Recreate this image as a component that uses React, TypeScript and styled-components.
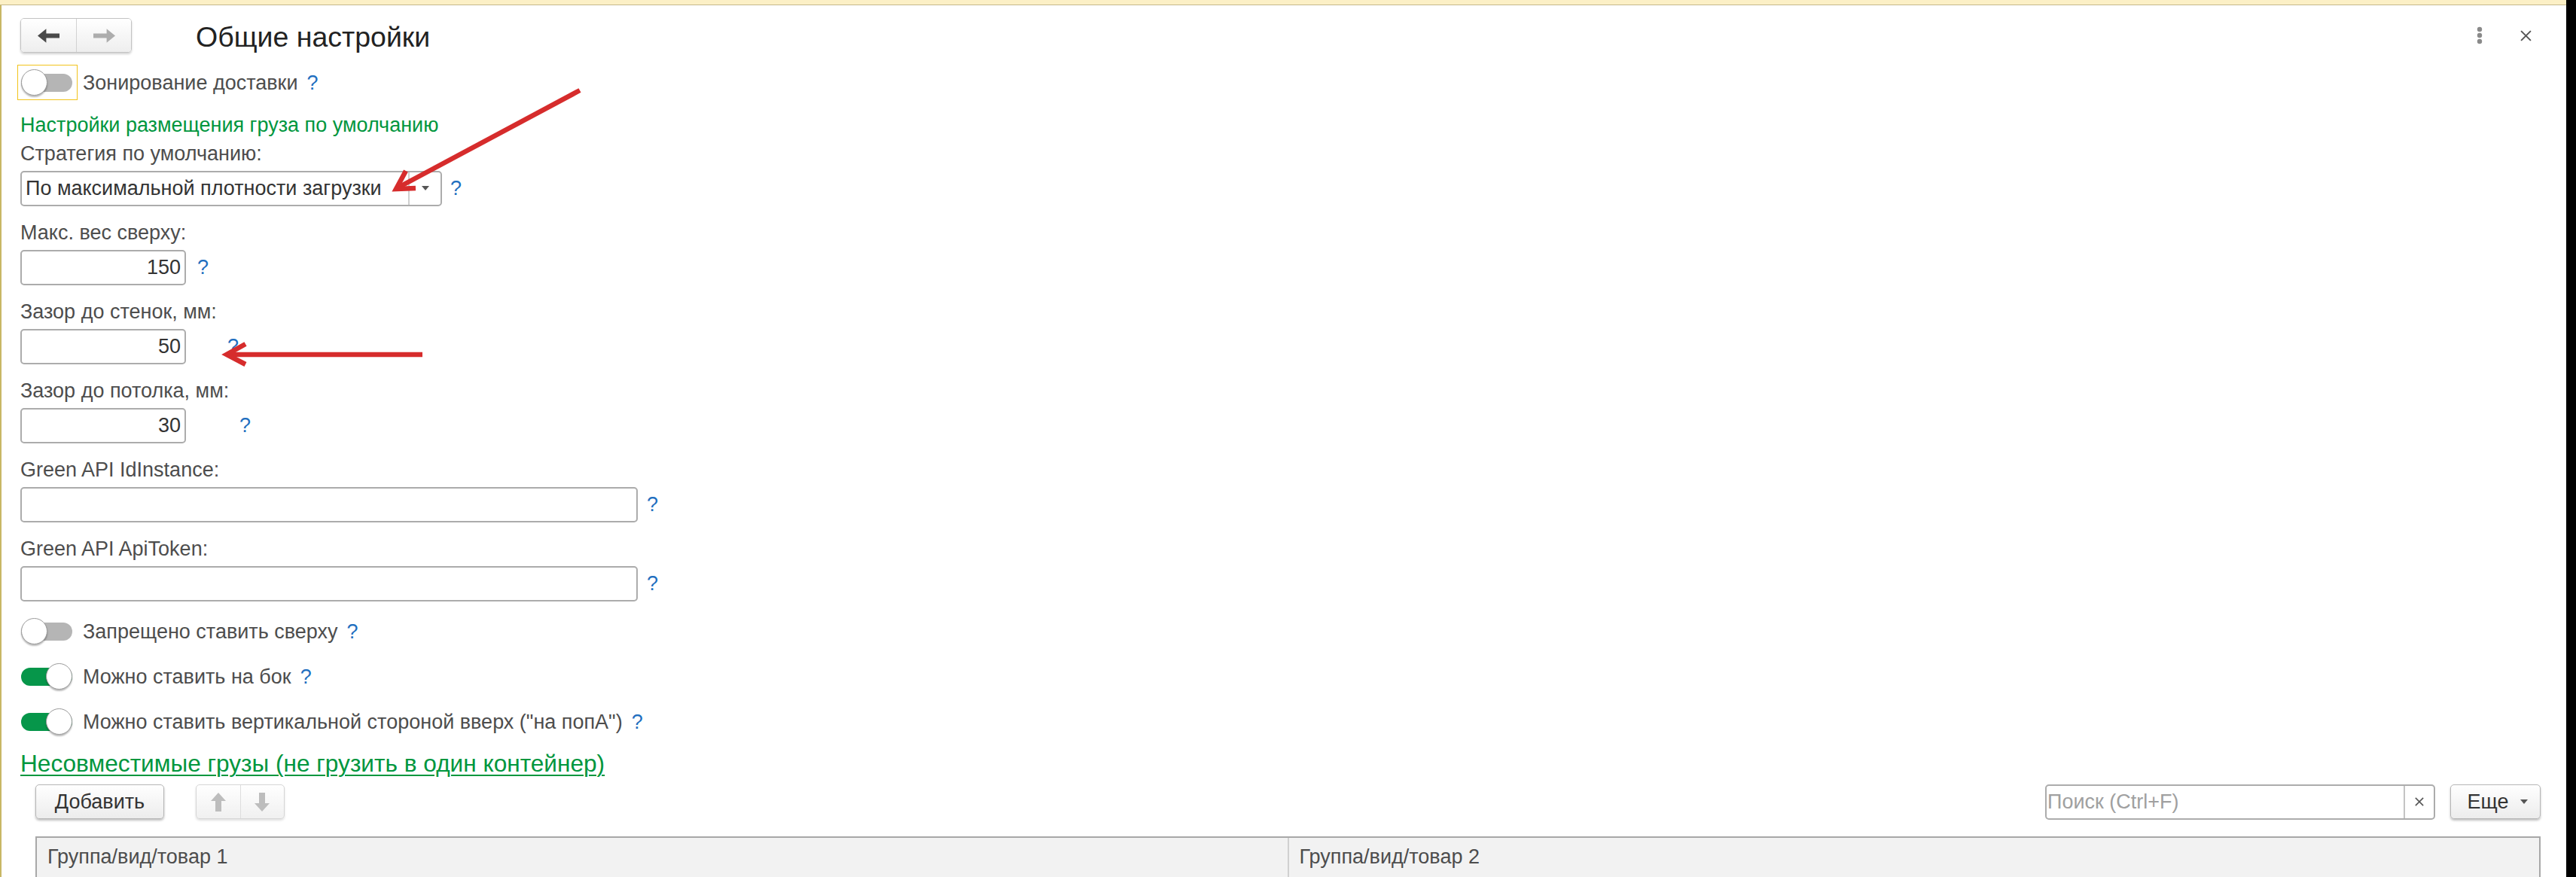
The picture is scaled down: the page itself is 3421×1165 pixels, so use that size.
import React from "react";
import styled, { createGlobalStyle } from "styled-components";

const GlobalStyle = createGlobalStyle`
  html, body {
    margin: 0;
    padding: 0;
    background: #fff;
  }
  body {
    font-family: "Liberation Sans", Arial, sans-serif;
    font-size: 27px;
    color: #4d4d4d;
  }
  * {
    box-sizing: border-box;
  }
`;

const colour = {
  label: "#4d4d4d",
  text: "#333333",
  green: "#00963e",
  help: "#1f6fbf",
  border: "#acacac",
  red: "#d62c2c",
};

const Screen = styled.div`
  display: flex;
  width: 3421px;
  height: 1165px;
  overflow: hidden;
`;

const Window = styled.div`
  position: relative;
  flex: 1;
  display: flex;
  flex-direction: column;
  background: #fff;
  overflow: hidden;
`;

const ScreenEdge = styled.div`
  width: 13px;
  flex-shrink: 0;
  background: #000;
`;

const TopStrip = styled.div`
  height: 7px;
  flex-shrink: 0;
  background: #fcf0c6;
  border-bottom: 1px solid #c6b98c;
`;

const Body = styled.div`
  flex: 1;
  display: flex;
  flex-direction: column;
  border-left: 2px solid #c8b765;
  padding: 0 34px 0 25px;
  white-space: nowrap;
`;

/* ---------- header ---------- */

const Header = styled.div`
  display: flex;
  align-items: flex-start;
  height: 46px;
  margin-top: 17px;
`;

const NavGroup = styled.div`
  display: flex;
  height: 46px;
  border: 1px solid #c3c3c3;
  border-radius: 5px;
  overflow: hidden;
  box-shadow: 0 2px 3px rgba(0, 0, 0, 0.18);
`;

const NavButton = styled.div`
  width: 73px;
  display: flex;
  align-items: center;
  justify-content: center;
  background: linear-gradient(#ffffff, #eeeeee);

  & + & {
    border-left: 1px solid #d2d2d2;
  }
`;

const Title = styled.h1`
  margin: 3px 0 0 85px;
  font-size: 37.5px;
  line-height: 44px;
  font-weight: normal;
  color: #222;
`;

const HeaderTools = styled.div`
  margin-left: auto;
  height: 46px;
  display: flex;
  align-items: center;
  gap: 50px;
  padding-right: 12px;
`;

/* ---------- form ---------- */

const ToggleRow = styled.div<{ $mt: number }>`
  display: flex;
  align-items: center;
  height: 47px;
  margin-top: ${(p) => p.$mt}px;
`;

const ToggleFrame = styled.div<{ $focused?: boolean }>`
  display: flex;
  align-items: center;
  height: 47px;
  margin-left: -4px;
  padding: 0 6px 0 4px;
  border: 1px solid ${(p) => (p.$focused ? "#f2c31b" : "transparent")};
`;

const Track = styled.span<{ $on?: boolean }>`
  display: flex;
  align-items: center;
  justify-content: ${(p) => (p.$on ? "flex-end" : "flex-start")};
  width: 68px;
  height: 24px;
  border-radius: 12px;
  background: ${(p) => (p.$on ? "#06964a" : "#b5b5b5")};
`;

const Knob = styled.span`
  flex-shrink: 0;
  width: 35px;
  height: 35px;
  border-radius: 50%;
  background: #fff;
  border: 1px solid #9c9c9c;
  box-shadow: 0 2px 2px rgba(0, 0, 0, 0.28);
`;

const ToggleText = styled.span`
  margin-left: 7px;
  line-height: 32px;
  color: ${colour.label};
`;

const Help = styled.span<{ $ml?: number }>`
  margin-left: ${(p) => p.$ml ?? 12}px;
  line-height: 32px;
  color: ${colour.help};
`;

const GroupTitle = styled.div`
  margin-top: 17px;
  line-height: 32px;
  color: ${colour.green};
`;

const FieldLabel = styled.div<{ $mt?: number }>`
  margin-top: ${(p) => p.$mt ?? 19.5}px;
  line-height: 32px;
  color: ${colour.label};
`;

const ControlRow = styled.div`
  display: flex;
  align-items: center;
  margin-top: 6.5px;
`;

const TextBox = styled.div<{ $width: number; $right?: boolean }>`
  width: ${(p) => p.$width}px;
  height: 47px;
  display: flex;
  align-items: center;
  justify-content: ${(p) => (p.$right ? "flex-end" : "flex-start")};
  padding: 0 5px;
  border: 2px solid ${colour.border};
  border-radius: 5px;
  background: #fff;
  color: ${colour.text};
`;

const Select = styled.div`
  width: 560px;
  height: 47px;
  display: flex;
  border: 2px solid ${colour.border};
  border-radius: 5px;
  background: #fff;
  color: ${colour.text};
`;

const SelectValue = styled.div`
  flex: 1;
  display: flex;
  align-items: center;
  padding-left: 5px;
`;

const SelectButton = styled.div`
  width: 43px;
  display: flex;
  align-items: center;
  justify-content: center;
  border-left: 2px solid #cfcfcf;
`;

const Caret = styled.span`
  width: 0;
  height: 0;
  border-left: 5px solid transparent;
  border-right: 5px solid transparent;
  border-top: 6px solid #555;
`;

const SectionLink = styled.a`
  margin-top: 16px;
  align-self: flex-start;
  font-size: 31.6px;
  line-height: 32px;
  color: ${colour.green};
  text-decoration: underline;
  text-decoration-thickness: 2px;
  text-underline-offset: 4px;
  cursor: pointer;
`;

/* ---------- table toolbar ---------- */

const Toolbar = styled.div`
  display: flex;
  align-items: center;
  height: 46px;
  margin: 12px 0 0 20px;
`;

const Button = styled.div<{ $width: number }>`
  width: ${(p) => p.$width}px;
  height: 46px;
  display: flex;
  align-items: center;
  justify-content: center;
  gap: 16px;
  border: 1px solid #b6b6b6;
  border-radius: 5px;
  background: linear-gradient(#ffffff, #ececec);
  box-shadow: 0 2px 3px rgba(0, 0, 0, 0.25);
  color: ${colour.text};
`;

const MoveGroup = styled.div`
  display: flex;
  width: 118px;
  height: 46px;
  margin-left: 42px;
  border: 1px solid #d6d6d6;
  border-radius: 5px;
  overflow: hidden;
  background: linear-gradient(#ffffff, #f0f0f0);
  box-shadow: 0 2px 3px rgba(0, 0, 0, 0.12);
`;

const MoveButton = styled.div`
  flex: 1;
  display: flex;
  align-items: center;
  justify-content: center;

  & + & {
    border-left: 1px solid #dedede;
  }
`;

const Search = styled.div`
  margin-left: auto;
  width: 518px;
  height: 47px;
  display: flex;
  border: 2px solid ${colour.border};
  border-radius: 5px;
  background: #fff;
`;

const SearchInput = styled.div`
  flex: 1;
  display: flex;
  align-items: center;
  padding-left: 1px;
  color: #a0a0a0;
`;

const SearchClear = styled.div`
  width: 40px;
  display: flex;
  align-items: center;
  justify-content: center;
  border-left: 2px solid #c4c4c4;
`;

const MoreButton = styled(Button)`
  margin-left: 20px;
  padding-left: 6px;
`;

/* ---------- table ---------- */

const TableHead = styled.div`
  display: flex;
  margin: 22.7px 0 0 20px;
  border: 2px solid #a8a8a8;
  border-bottom: none;
  background: #f2f2f2;
  height: 80px;
`;

const HeadCell = styled.div`
  flex: 1;
  padding: 9px 15px 0 14px;
  line-height: 32px;
  color: ${colour.label};

  & + & {
    border-left: 2px solid #d0d0d0;
  }
`;

const Annotations = styled.svg`
  position: absolute;
  inset: 0;
  width: 100%;
  height: 100%;
  pointer-events: none;
`;

/* ---------- icons ---------- */

const ArrowLeft = ({ color }: { color: string }) => (
  <svg width="29" height="19" viewBox="0 0 28 18">
    <path d="M0 9 L11 0 V6 H28 V12 H11 V18 Z" fill={color} />
  </svg>
);

const ArrowRight = ({ color }: { color: string }) => (
  <svg width="29" height="19" viewBox="0 0 28 18">
    <path d="M28 9 L17 0 V6 H0 V12 H17 V18 Z" fill={color} />
  </svg>
);

const ArrowUp = () => (
  <svg width="20" height="25" viewBox="0 0 20 25">
    <path d="M10 0 L20 11 H14 V25 H6 V11 H0 Z" fill="#bdbdbd" />
  </svg>
);

const ArrowDown = () => (
  <svg width="20" height="25" viewBox="0 0 20 25">
    <path d="M10 25 L20 14 H14 V0 H6 V14 H0 Z" fill="#bdbdbd" />
  </svg>
);

const MenuDots = () => (
  <svg width="8" height="24" viewBox="0 0 8 24">
    <circle cx="4" cy="4" r="3.2" fill="#8a8a8a" />
    <circle cx="4" cy="12" r="3.2" fill="#8a8a8a" />
    <circle cx="4" cy="20" r="3.2" fill="#8a8a8a" />
  </svg>
);

const Cross = ({ size, color }: { size: number; color: string }) => (
  <svg width={size} height={size} viewBox="0 0 14 14">
    <path d="M1 1 L13 13 M13 1 L1 13" stroke={color} strokeWidth="1.8" />
  </svg>
);

const Toggle = ({ on, focused }: { on?: boolean; focused?: boolean }) => (
  <ToggleFrame $focused={focused}>
    <Track $on={on}>
      <Knob />
    </Track>
  </ToggleFrame>
);

type Flag = { text: string; on?: boolean; mt: number };

const flags: Flag[] = [
  { text: "Запрещено ставить сверху", mt: 16.7 },
  { text: "Можно ставить на бок", on: true, mt: 13 },
  { text: 'Можно ставить вертикальной стороной вверх ("на попА")', on: true, mt: 13 },
];

type NumberField = { label: string; value: string; helpGap: number };

const numberFields: NumberField[] = [
  { label: "Макс. вес сверху:", value: "150", helpGap: 15 },
  { label: "Зазор до стенок, мм:", value: "50", helpGap: 55 },
  { label: "Зазор до потолка, мм:", value: "30", helpGap: 71 },
];

const apiFields = ["Green API IdInstance:", "Green API ApiToken:"];

export default function App() {
  return (
    <>
      <GlobalStyle />
      <Screen>
        <Window>
          <TopStrip />
          <Body>
            <Header>
              <NavGroup>
                <NavButton>
                  <ArrowLeft color="#4a4a4a" />
                </NavButton>
                <NavButton>
                  <ArrowRight color="#adadad" />
                </NavButton>
              </NavGroup>
              <Title>Общие настройки</Title>
              <HeaderTools>
                <MenuDots />
                <Cross size={15} color="#555" />
              </HeaderTools>
            </Header>

            <ToggleRow $mt={16}>
              <Toggle focused />
              <ToggleText>Зонирование доставки</ToggleText>
              <Help>?</Help>
            </ToggleRow>

            <GroupTitle>Настройки размещения груза по умолчанию</GroupTitle>

            <FieldLabel $mt={6}>Стратегия по умолчанию:</FieldLabel>
            <ControlRow>
              <Select>
                <SelectValue>По максимальной плотности загрузки</SelectValue>
                <SelectButton>
                  <Caret />
                </SelectButton>
              </Select>
              <Help $ml={11}>?</Help>
            </ControlRow>

            {numberFields.map((field) => (
              <React.Fragment key={field.label}>
                <FieldLabel>{field.label}</FieldLabel>
                <ControlRow>
                  <TextBox $width={220} $right>
                    {field.value}
                  </TextBox>
                  <Help $ml={field.helpGap}>?</Help>
                </ControlRow>
              </React.Fragment>
            ))}

            {apiFields.map((label) => (
              <React.Fragment key={label}>
                <FieldLabel>{label}</FieldLabel>
                <ControlRow>
                  <TextBox $width={820} />
                  <Help $ml={12}>?</Help>
                </ControlRow>
              </React.Fragment>
            ))}

            {flags.map((flag) => (
              <ToggleRow key={flag.text} $mt={flag.mt}>
                <Toggle on={flag.on} />
                <ToggleText>{flag.text}</ToggleText>
                <Help>?</Help>
              </ToggleRow>
            ))}

            <SectionLink>Несовместимые грузы (не грузить в один контейнер)</SectionLink>

            <Toolbar>
              <Button $width={171}>Добавить</Button>
              <MoveGroup>
                <MoveButton>
                  <ArrowUp />
                </MoveButton>
                <MoveButton>
                  <ArrowDown />
                </MoveButton>
              </MoveGroup>
              <Search>
                <SearchInput>Поиск (Ctrl+F)</SearchInput>
                <SearchClear>
                  <Cross size={12} color="#555" />
                </SearchClear>
              </Search>
              <MoreButton $width={120}>
                Еще
                <Caret />
              </MoreButton>
            </Toolbar>

            <TableHead>
              <HeadCell>Группа/вид/товар 1</HeadCell>
              <HeadCell>Группа/вид/товар 2</HeadCell>
            </TableHead>
          </Body>

          <Annotations viewBox="0 0 3408 1165">
            <g stroke={colour.red} strokeWidth="6.5" fill="none" strokeLinejoin="miter">
              <path d="M770 120 L527 250" />
              <path d="M539 227 L526 251 L552 250" />
              <path d="M561 471 L301 471" />
              <path d="M326 457 L301 471 L326 484" />
            </g>
          </Annotations>
        </Window>
        <ScreenEdge />
      </Screen>
    </>
  );
}
